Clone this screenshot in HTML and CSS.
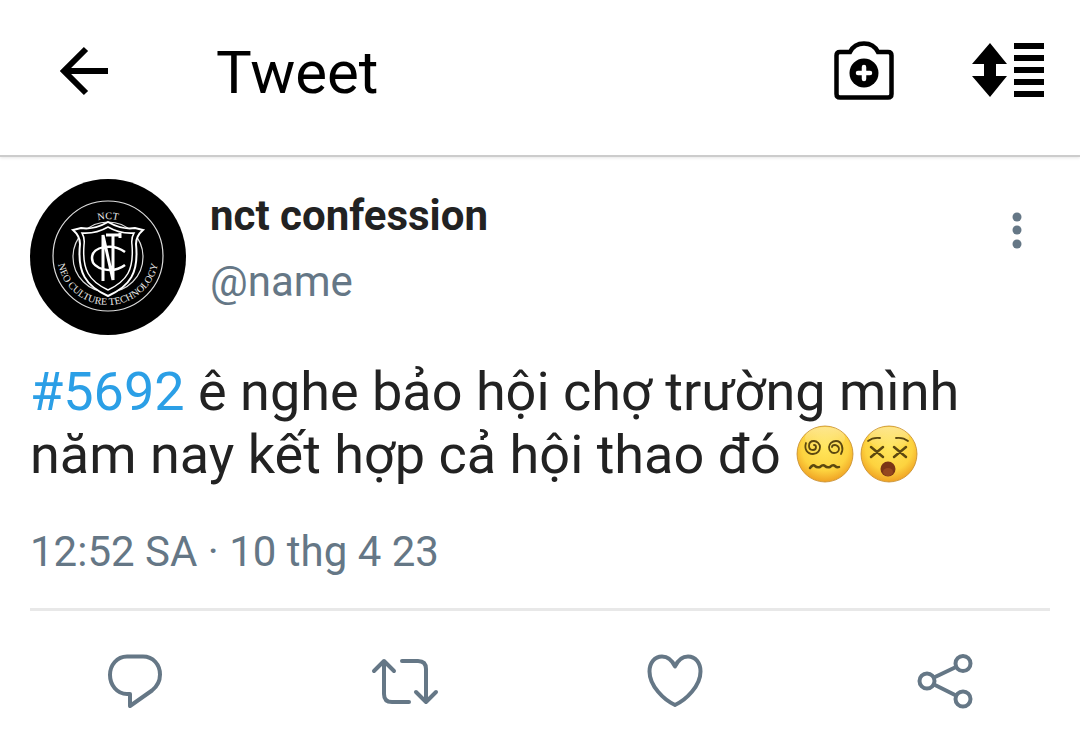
FILE: index.html
```html
<!DOCTYPE html>
<html lang="vi">
<head>
    <meta charset="UTF-8">
    <meta name="viewport" content="width=device-width, initial-scale=1.0">
    <title>Tweet</title>
    <link rel="stylesheet" href="styles.css">
</head>
<body>
    <header class="header">
        <button class="icon-button" aria-label="Back">
            <svg width="48" height="50" viewBox="0 0 48 50" fill="none" stroke="#000" stroke-width="6">
                <path d="M26 3L4 25l22 22M4 25h44"/>
            </svg>
        </button>
        <h1 class="title">Tweet</h1>
        <div class="tools">
            <button class="icon-button" aria-label="Add photo">
                <svg width="60" height="60" viewBox="0 0 60 60">
                    <path d="M6 11h10c3-6 8-8.500 14-8.500S41 5 44 11h10q3.500 0 3.500 3.500V53q0 3.500-3.500 3.500H6q-3.500 0-3.500-3.500V14.500Q2.500 11 6 11z" fill="none" stroke="#000" stroke-width="4.500"/>
                    <circle cx="30" cy="32" r="14.500"/>
                    <path d="M30 26v12M24 32h12" stroke="#fff" stroke-width="4.500" stroke-linecap="round"/>
                </svg>
            </button>
            <button class="icon-button" aria-label="Sort">
                <svg width="72" height="56" viewBox="0 0 72 56">
                    <path d="M18 0l17 21H24v12h11L18 54 0 33h12V21H0z"/>
                    <path d="M42 0h30v6H42zM42 12h30v6H42zM42 24h30v6H42zM42 36h30v6H42zM42 48h30v6H42z"/>
                </svg>
            </button>
        </div>
    </header>

    <main>
        <article class="tweet">
            <div class="author">
                <svg class="avatar" viewBox="0 0 156 156" role="img" aria-label="NCT">
                    <defs>
                        <path id="arc-top" d="M41 77a37 37 0 0 1 74 0"/>
                        <path id="arc-bottom" d="M27 75a51 51 0 0 0 102 0"/>
                    </defs>
                    <circle cx="78" cy="78" r="78"/>
                    <g fill="none" stroke="#ddd">
                        <circle cx="78" cy="77" r="55" stroke-width="1.200"/>
                        <circle cx="78" cy="78" r="35" stroke-width="1.200"/>
                        <!-- shield -->
                        <path d="M78 43q-14 8-27 6l-8 2q7 6 7 14c-3 29 6 42 28 52 22-10 31-23 28-52q0-8 7-14l-8-2q-13 2-27-6z" fill="#000" stroke="#fff" stroke-width="2"/>
                        <path d="M78 48q-12 7-26 6 3 5 2 12c-2 25 5 36 24 45 19-9 26-20 24-45q-1-7 2-12-14 1-26-6z" stroke="#fff" stroke-width="1.500"/>
                        <!-- monogram -->
                        <path d="M73 102V56l10 45V56M76 56h14M90 54v5" stroke="#fff" stroke-width="3"/>
                        <path d="M95 73c-12-9-33-6-33 6s21 16 33 7" stroke="#fff" stroke-width="2.500"/>
                    </g>
                    <g class="avatar-text">
                        <text><textPath href="#arc-top" startOffset="50%" text-anchor="middle">NCT</textPath></text>
                        <text><textPath href="#arc-bottom" startOffset="50%" text-anchor="middle">NEO CULTURE TECHNOLOGY</textPath></text>
                    </g>
                </svg>
                <div class="names">
                    <div class="name">nct confession</div>
                    <div class="handle">@name</div>
                </div>
                <button class="icon-button more" aria-label="More">
                    <svg width="10" height="40" viewBox="0 0 10 40" fill="#657786">
                        <circle cx="5" cy="7" r="4.500"/>
                        <circle cx="5" cy="20" r="4.500"/>
                        <circle cx="5" cy="34" r="4.500"/>
                    </svg>
                </button>
            </div>

            <p class="text"><a href="#5692">#5692</a> ê nghe bảo hội chợ trường mình năm nay kết hợp cả hội thao đó <span class="emojis"><svg class="emoji" viewBox="0 0 58 58" role="img" aria-label="Face with spiral eyes">
                    <defs>
                        <radialGradient id="face" cx="50%" cy="38%" r="64%">
                            <stop offset="0" stop-color="#ffe65c"/>
                            <stop offset="0.650" stop-color="#fdd33f"/>
                            <stop offset="1" stop-color="#ee9c20"/>
                        </radialGradient>
                        <linearGradient id="shine" x2="0" y2="1">
                            <stop offset="0" stop-color="#fff" stop-opacity="0.400"/>
                            <stop offset="1" stop-color="#fff" stop-opacity="0"/>
                        </linearGradient>
                    </defs>
                    <circle cx="29" cy="29" r="28" fill="url(#face)" stroke="#c58b2b" stroke-width="0.800"/>
                    <ellipse cx="29" cy="13" rx="20" ry="11" fill="url(#shine)"/>
                    <g fill="none" stroke="#5c4810" stroke-width="1.800" stroke-linecap="round">
                        <path d="M10 18c-2 6 1 11 7 11 5 0 7-4 7-7s-3-6-6-6-5 2-5 5 2 4 4 4 3-1 3-3-1-2-2-2"/>
                        <path d="M45 29c3-5 1-13-5-13-4 0-7 3-7 6s2 6 5 6 5-2 5-4-2-4-4-4-3 1-3 2"/>
                        <path d="M14 43q3-4 5-2t5 1q3-3 5-1t5 1q3-3 5-1t4 1" stroke-width="2.500"/>
                    </g>
                </svg><svg class="emoji" viewBox="0 0 58 58" role="img" aria-label="Dizzy face">
                    <circle cx="29" cy="29" r="28" fill="url(#face)" stroke="#c58b2b" stroke-width="0.800"/>
                    <ellipse cx="29" cy="13" rx="20" ry="11" fill="url(#shine)"/>
                    <g fill="none" stroke="#5c4810" stroke-width="2.500" stroke-linecap="round">
                        <path d="M8 16q5-4 12-3M36 13q7-1 12 3" stroke-width="1.800"/>
                        <path d="M11 22l12 10M23 22L11 32M34 22l12 10M46 22L34 32"/>
                    </g>
                    <circle cx="28" cy="44" r="7.500" fill="#7a3516"/>
                    <ellipse cx="28" cy="47" rx="5" ry="4" fill="#95471f"/>
                </svg></span></p>

            <time class="date" datetime="2023-04-10T00:52">12:52 SA · 10 thg 4 23</time>
        </article>

        <div class="actions">
            <button class="icon-button" aria-label="Reply">
                <svg class="action-icon" width="56" height="56" viewBox="0 0 56 56">
                    <path d="M20 2.500h16c10 0 17 8 17 18 0 7-3 12-8 16L23 52V40h-3C10 40 3 31 3 21S10 2.500 20 2.500z"/>
                </svg>
            </button>
            <button class="icon-button" aria-label="Retweet">
                <svg class="action-icon" width="68" height="56" viewBox="0 0 68 56">
                    <path d="M3 17L13 7l10 10M13 7v33q0 8 8 8h17M31 7h16q8 0 8 8v33M45 38l10 10 10-10"/>
                </svg>
            </button>
            <button class="icon-button" aria-label="Like">
                <svg class="action-icon" width="56" height="56" viewBox="0 0 56 56">
                    <path d="M28 12.500C25 6 20 2.500 15 2.500 7.500 2.500 2.500 9 2.500 17.500 2.500 32 17 46 28 51 39 46 53.500 32 53.500 17.500 53.500 9 48.500 2.500 41 2.500 36 2.500 31 6 28 12.500z"/>
                </svg>
            </button>
            <button class="icon-button" aria-label="Share">
                <svg class="action-icon" width="56" height="56" viewBox="0 0 56 56">
                    <circle cx="10" cy="27" r="7.500"/>
                    <circle cx="46" cy="9.500" r="7.500"/>
                    <circle cx="46" cy="45" r="7.500"/>
                    <path d="M17 23.500L39 13M17 30.500L39 41.500"/>
                </svg>
            </button>
        </div>
    </main>
</body>
</html>
```

FILE: styles.css
```css
body {
    font-family: Roboto, sans-serif;
    margin: 0;
    background-color: #fff;
    color: #222;
}
.header {
    display: flex;
    align-items: center;
    height: 142px;
    padding: 0 36px 13px 60px;
    border-bottom: 2px solid #ccc;
    box-shadow: 0 1px 3px rgba(0,0,0,0.1);
}
.icon-button {
    display: flex;
    padding: 0;
    border: none;
    background: none;
    cursor: pointer;
}
.title {
    margin: 0 0 0 108px;
    padding-top: 4px;
    font-size: 60px;
    line-height: 68px;
    font-weight: 400;
    color: #000;
}
.tools {
    display: flex;
    align-items: center;
    gap: 78px;
    margin-left: auto;
}
.tweet {
    margin: 0 30px;
    padding: 22px 0 31px;
    border-bottom: 3px solid #e8e8e8;
}
.author {
    display: flex;
    align-items: flex-start;
}
.avatar {
    width: 156px;
    height: 156px;
    flex-shrink: 0;
}
.avatar-text {
    font-family: "Liberation Serif", serif;
    font-size: 10px;
    fill: #eee;
}
.names {
    padding: 4px 0 0 24px;
    font-size: 42px;
    line-height: 66px;
}
.name {
    font-weight: 700;
}
.handle {
    color: #657786;
}
.more {
    margin: 31px 28px 0 auto;
}
.text {
    margin: 25px 0 41px;
    font-size: 54px;
    line-height: 63px;
}
.text a {
    color: #2b9fe6;
    text-decoration: none;
}
.emojis {
    display: inline-flex;
    gap: 6px;
    padding-left: 2px;
    vertical-align: -10px;
}
.emoji {
    width: 58px;
    height: 58px;
}
.date {
    display: block;
    font-size: 42px;
    line-height: 50px;
    color: #657786;
}
.actions {
    display: grid;
    grid-template-columns: repeat(4, 1fr);
    justify-items: center;
    padding: 43px 0 38px;
}
.action-icon {
    fill: none;
    stroke: #657786;
    stroke-width: 4;
    stroke-linecap: round;
    stroke-linejoin: round;
}
```
